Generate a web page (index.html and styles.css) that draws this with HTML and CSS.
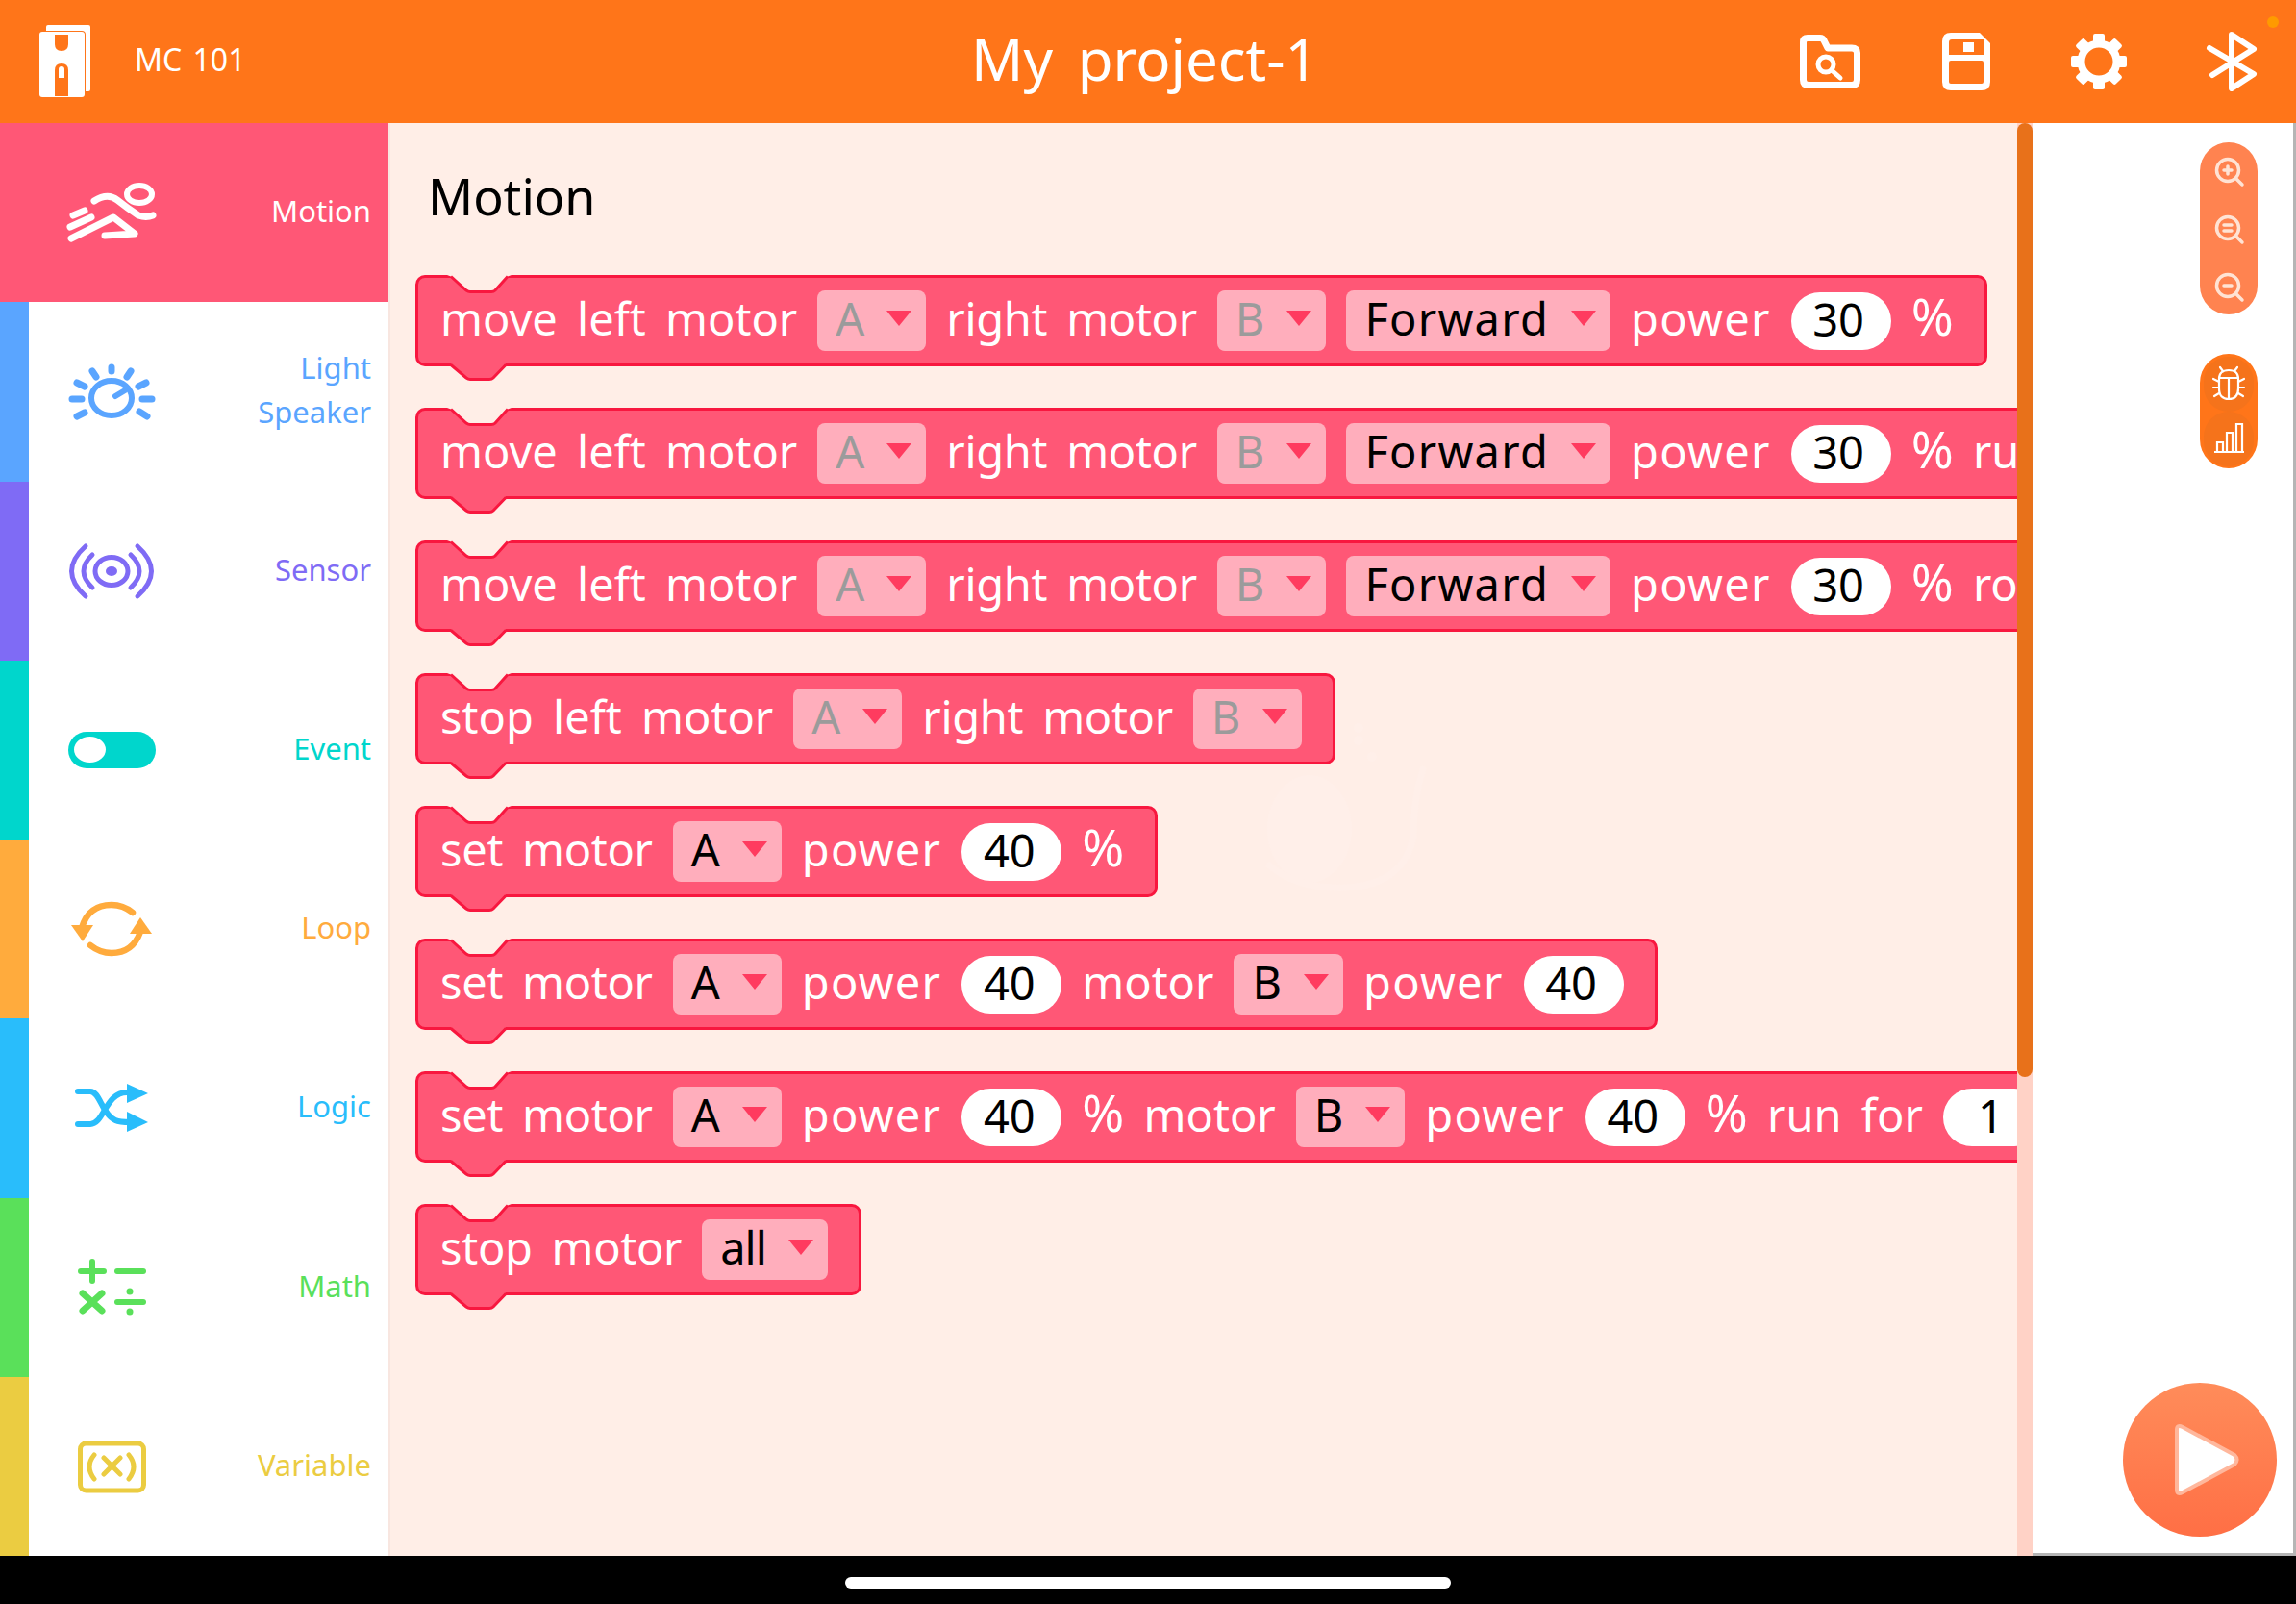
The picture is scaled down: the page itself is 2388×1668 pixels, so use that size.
FILE: index.html
```html
<!DOCTYPE html>
<html lang="en">
<head>
  <meta charset="UTF-8" />
  <title>My project-1</title>
  <link rel="stylesheet" href="styles.css">
</head>
<body>
  <svg class="defs" width="0" height="0">
    <symbol id="notch-top" viewBox="0 0 67 22">
      <path d="M0 0H67L63 1.5L50 16Q48.5 17.5 46 17.5H24Q22 17.5 20 16L4 1.5Z" fill="#ffeee7"/>
      <path d="M4 1.5L20 16Q22 17.5 24 17.5H46Q48.5 17.5 50 16L63 1.5" fill="none" stroke="#f8173f" stroke-width="3"/>
    </symbol>
    <symbol id="notch-bottom" viewBox="0 0 67 20">
      <path d="M4 0L20 15Q22 16.5 24 16.5H44Q46.5 16.5 48 15L61 0Z" fill="#ff5776"/>
      <path d="M4 1.5L20 15Q22 16.5 24 16.5H44Q46.5 16.5 48 15L61 1.5" fill="none" stroke="#f8173f" stroke-width="3"/>
    </symbol>
  </svg>

  <div class="app">
    <header class="topbar">
      <div class="device">
        <svg class="logo" width="54" height="76" viewBox="41 23 54 76">
          <rect x="48" y="23" width="46" height="69" rx="2" fill="#fff"/>
          <rect x="40" y="29" width="49" height="70" rx="4" fill="#ff7519"/>
          <rect x="41" y="30" width="47" height="68" rx="3" fill="#fff"/>
          <path d="M57 33H71V43Q71 50 64 50Q57 50 57 43Z" fill="#ff7519"/>
          <path d="M57 97V70Q57 63 64 63Q71 63 71 70V97Z" fill="#ff7519"/>
          <path d="M61 78V69Q61 66 64 66Q67 66 67 69V78Z" fill="#fff"/>
        </svg>
        <span class="device-name">MC 101</span>
      </div>
      <h1 class="project">My project-1</h1>
      <div class="top-actions">
        <svg width="64" height="58" viewBox="1872 35 64 58" fill="none" stroke="#fff" stroke-linecap="round" stroke-linejoin="round">
          <path d="M1880 39.5H1893Q1896 39.5 1897 42L1901 50H1926Q1931.5 50 1931.5 55V83Q1931.5 88.5 1926 88.5H1881Q1875.5 88.5 1875.5 83V44Q1875.5 39.5 1880 39.5Z" stroke-width="7"/>
          <circle cx="1899" cy="67" r="8" stroke-width="5"/>
          <path d="M1905 73L1914 81" stroke-width="5"/>
        </svg>
        <svg width="50" height="60" viewBox="2019 34 50 60">
          <path d="M2028 34H2058L2069 45V85Q2069 94 2060 94H2028Q2019 94 2019 85V43Q2019 34 2028 34Z" fill="#fff"/>
          <path d="M2026 44Q2026 41 2029 41H2062V57H2026Z" fill="#ff7519"/>
          <rect x="2041" y="44" width="11" height="10" fill="#fff"/>
          <rect x="2026" y="63" width="36" height="24" rx="2" fill="#ff7519"/>
        </svg>
        <svg class="gear" width="58" height="58" viewBox="-29 -29 58 58">
          <g fill="#fff">
            <rect x="-6" y="-29" width="12" height="12" rx="2"/>
            <rect x="-6" y="-29" width="12" height="12" rx="2" transform="rotate(45)"/>
            <rect x="-6" y="-29" width="12" height="12" rx="2" transform="rotate(90)"/>
            <rect x="-6" y="-29" width="12" height="12" rx="2" transform="rotate(135)"/>
            <rect x="-6" y="-29" width="12" height="12" rx="2" transform="rotate(180)"/>
            <rect x="-6" y="-29" width="12" height="12" rx="2" transform="rotate(225)"/>
            <rect x="-6" y="-29" width="12" height="12" rx="2" transform="rotate(270)"/>
            <rect x="-6" y="-29" width="12" height="12" rx="2" transform="rotate(315)"/>
          </g>
          <circle r="18.5" fill="none" stroke="#fff" stroke-width="8"/>
        </svg>
        <svg class="bt" width="54" height="62" viewBox="2294 33 54 62" fill="none" stroke="#fff" stroke-width="6" stroke-linecap="round" stroke-linejoin="round">
          <path d="M2298 50L2344 77L2321 92V36L2344 51L2301 78"/>
        </svg>
      </div>
      <span class="status-dot"></span>
    </header>

    <main class="editor">
      <nav class="sidebar">
        <div class="cat cat-motion">
          <svg class="cat-icon" width="100" height="70" viewBox="66 186 100 70" fill="none" stroke="#fff" stroke-width="7" stroke-linecap="round" stroke-linejoin="round">
            <ellipse cx="145" cy="202" rx="13" ry="9" stroke-width="6"/>
            <path d="M98 209Q112 200 122 208T144 224Q152 227 159 224"/>
            <path d="M74 248L118 226L140 243L109 245"/>
            <path d="M76 224L88 219M73 236L95 226"/>
          </svg>
          <span class="cat-label">Motion</span>
        </div>
        <div class="cat cat-light">
          <svg class="cat-icon" width="100" height="70" viewBox="66 372 100 70" fill="none" stroke="#5aa5ff" stroke-width="6" stroke-linecap="round">
            <ellipse cx="116" cy="414" rx="21" ry="18"/>
            <path d="M120 412L130 406"/>
            <path d="M116 382V386M96 386L100 392M136 386L132 392M80 398L88 402M152 398L144 402M75 415H85M158 415H148M80 433L88 429M153 433L145 428" stroke-width="7"/>
          </svg>
          <span class="cat-label">Light<br>Speaker</span>
        </div>
        <div class="cat cat-sensor">
          <svg class="cat-icon" width="100" height="70" viewBox="66 558 100 70" fill="none" stroke="#7f6bf5" stroke-width="5" stroke-linecap="round">
            <ellipse cx="116" cy="593" rx="17" ry="14.5"/>
            <ellipse cx="116" cy="593" rx="6" ry="5" fill="#7f6bf5" stroke="none"/>
            <path d="M96 576Q78 593 96 610M136 576Q154 593 136 610"/>
            <path d="M89 567Q60 593 89 619M143 567Q172 593 143 619"/>
          </svg>
          <span class="cat-label">Sensor</span>
        </div>
        <div class="cat cat-event">
          <div class="toggle"><span class="toggle-knob"></span></div>
          <span class="cat-label">Event</span>
        </div>
        <div class="cat cat-loop">
          <svg class="cat-icon" width="100" height="70" viewBox="66 932 100 70" fill="none" stroke="#ffab3d" stroke-width="6.5" stroke-linecap="round">
            <path d="M138 950Q128 942 116 942Q92 942 85 966"/>
            <path d="M94 984Q104 992 116 992Q138 992 146 970"/>
            <path d="M74 963H97L86 980Z" fill="#ffab3d" stroke="none"/>
            <path d="M135 972H158L146 955Z" fill="#ffab3d" stroke="none"/>
          </svg>
          <span class="cat-label">Loop</span>
        </div>
        <div class="cat cat-logic">
          <svg class="cat-icon" width="100" height="70" viewBox="66 1118 100 70" fill="none" stroke="#29bdfb" stroke-width="6" stroke-linecap="round">
            <path d="M81 1170H94C108 1170 110 1137 132 1137H136"/>
            <path d="M81 1136H94C104 1136 106 1160 120 1166Q124 1168 136 1168"/>
            <path d="M132 1128L154 1138L132 1148Z" fill="#29bdfb" stroke="none"/>
            <path d="M132 1157L154 1168L132 1178Z" fill="#29bdfb" stroke="none"/>
          </svg>
          <span class="cat-label">Logic</span>
        </div>
        <div class="cat cat-math">
          <svg class="cat-icon" width="100" height="70" viewBox="66 1304 100 70" fill="none" stroke="#5ae05a" stroke-width="6" stroke-linecap="round">
            <path d="M84 1322H108M96 1312V1332"/>
            <path d="M122 1322H149"/>
            <path d="M86 1345L106 1363M106 1345L86 1363" stroke-width="7"/>
            <path d="M122 1354H149"/>
            <circle cx="135" cy="1343" r="3.5" fill="#5ae05a" stroke="none"/>
            <circle cx="135" cy="1364" r="3.5" fill="#5ae05a" stroke="none"/>
          </svg>
          <span class="cat-label">Math</span>
        </div>
        <div class="cat cat-variable">
          <svg class="cat-icon" width="100" height="70" viewBox="66 1490 100 70" fill="none" stroke="#ebcc41" stroke-width="5" stroke-linecap="round">
            <rect x="83.5" y="1501" width="66" height="49" rx="6"/>
            <path d="M98 1513Q88 1525 98 1538M134 1513Q144 1525 134 1538"/>
            <path d="M108 1516L125 1533M125 1516L108 1533"/>
          </svg>
          <span class="cat-label">Variable</span>
        </div>
      </nav>

      <section class="workspace">
        <svg class="watermark" width="340" height="219" viewBox="0 0 340 219" fill="none" stroke="#ffefe9" stroke-width="7" stroke-linecap="round">
          <ellipse cx="132" cy="117" rx="44" ry="56" fill="#ffefe9" stroke="none"/>
          <path d="M250 55Q240 85 240 125Q230 175 170 178Q120 180 90 155"/>
          <path d="M183 25L183 25M197 42L197 42M183 12L183 12" stroke-width="10"/>
        </svg>
        <h2 class="section-title">Motion</h2>

        <div class="block">
          <svg class="notch notch-in"><use href="#notch-top"/></svg>
          <span>move left motor</span>
          <span class="drop muted">A<i class="caret"></i></span>
          <span class="tight">right motor</span>
          <span class="drop muted">B<i class="caret"></i></span>
          <span class="drop wide">Forward<i class="caret"></i></span>
          <span class="wide">power</span>
          <span class="num">30</span>
          <span><span class="pct">%</span></span>
          <svg class="notch notch-out"><use href="#notch-bottom"/></svg>
        </div>

        <div class="block">
          <svg class="notch notch-in"><use href="#notch-top"/></svg>
          <span>move left motor</span>
          <span class="drop muted">A<i class="caret"></i></span>
          <span class="tight">right motor</span>
          <span class="drop muted">B<i class="caret"></i></span>
          <span class="drop wide">Forward<i class="caret"></i></span>
          <span class="wide">power</span>
          <span class="num">30</span>
          <span><span class="pct">%</span> run for</span>
          <svg class="notch notch-out"><use href="#notch-bottom"/></svg>
        </div>

        <div class="block">
          <svg class="notch notch-in"><use href="#notch-top"/></svg>
          <span>move left motor</span>
          <span class="drop muted">A<i class="caret"></i></span>
          <span class="tight">right motor</span>
          <span class="drop muted">B<i class="caret"></i></span>
          <span class="drop wide">Forward<i class="caret"></i></span>
          <span class="wide">power</span>
          <span class="num">30</span>
          <span><span class="pct">%</span> rotations</span>
          <svg class="notch notch-out"><use href="#notch-bottom"/></svg>
        </div>

        <div class="block">
          <svg class="notch notch-in"><use href="#notch-top"/></svg>
          <span>stop left motor</span>
          <span class="drop muted">A<i class="caret"></i></span>
          <span class="tight">right motor</span>
          <span class="drop muted">B<i class="caret"></i></span>
          <svg class="notch notch-out"><use href="#notch-bottom"/></svg>
        </div>

        <div class="block">
          <svg class="notch notch-in"><use href="#notch-top"/></svg>
          <span class="tight">set motor</span>
          <span class="drop">A<i class="caret"></i></span>
          <span class="wide">power</span>
          <span class="num">40</span>
          <span><span class="pct">%</span></span>
          <svg class="notch notch-out"><use href="#notch-bottom"/></svg>
        </div>

        <div class="block">
          <svg class="notch notch-in"><use href="#notch-top"/></svg>
          <span class="tight">set motor</span>
          <span class="drop">A<i class="caret"></i></span>
          <span class="wide">power</span>
          <span class="num">40</span>
          <span>motor</span>
          <span class="drop">B<i class="caret"></i></span>
          <span class="wide">power</span>
          <span class="num">40</span>
          <svg class="notch notch-out"><use href="#notch-bottom"/></svg>
        </div>

        <div class="block">
          <svg class="notch notch-in"><use href="#notch-top"/></svg>
          <span class="tight">set motor</span>
          <span class="drop">A<i class="caret"></i></span>
          <span class="wide">power</span>
          <span class="num">40</span>
          <span><span class="pct">%</span> motor</span>
          <span class="drop">B<i class="caret"></i></span>
          <span class="wide">power</span>
          <span class="num">40</span>
          <span><span class="pct">%</span> run for</span>
          <span class="num">1</span>
          <svg class="notch notch-out"><use href="#notch-bottom"/></svg>
        </div>

        <div class="block">
          <svg class="notch notch-in"><use href="#notch-top"/></svg>
          <span class="tight">stop motor</span>
          <span class="drop squeeze">all<i class="caret"></i></span>
          <svg class="notch notch-out"><use href="#notch-bottom"/></svg>
        </div>
      </section>

      <div class="scrollbar"><div class="scroll-thumb"></div></div>

      <aside class="stage">
        <div class="tool-pill tool-zoom">
          <svg width="44" height="44" viewBox="-21 -21 44 44" fill="none" stroke="#ffe3d4" stroke-width="3.5" stroke-linecap="round">
            <circle r="11.5"/><path d="M9 9L15 15M-4 0H4M0 -4V4"/>
          </svg>
          <svg width="44" height="44" viewBox="-21 -21 44 44" fill="none" stroke="#ffe3d4" stroke-width="3.5" stroke-linecap="round">
            <circle r="11.5"/><path d="M9 9L15 15M-4 -3H4M-4 3H4"/>
          </svg>
          <svg width="44" height="44" viewBox="-21 -21 44 44" fill="none" stroke="#ffe3d4" stroke-width="3.5" stroke-linecap="round">
            <circle r="11.5"/><path d="M9 9L15 15M-4 0H4"/>
          </svg>
        </div>
        <div class="tool-pill tool-debug">
          <span class="tool-btn">
            <svg width="36" height="38" viewBox="0 0 36 38" fill="none" stroke="#fff" stroke-width="2.2" stroke-linecap="round">
              <path d="M8 14Q8 5 18 5Q28 5 28 14V24Q28 35 18 35Q8 35 8 24Z"/>
              <path d="M8 13H28M18 13V35M12 6L9 2M24 6L27 2M8 17L2 14M28 17L34 14M8 23H2M28 23H34M8 29L3 32M28 29L33 32"/>
            </svg>
          </span>
          <span class="tool-btn">
            <svg width="34" height="34" viewBox="0 0 34 34" fill="none" stroke="#fff" stroke-width="2.2">
              <path d="M2 31H33M5 31V21H11V31M15 31V11H21V31M25 31V2H31V31"/>
            </svg>
          </span>
        </div>
        <div class="run-btn">
          <svg width="80" height="82" viewBox="0 0 80 82">
            <path d="M10 10Q10 4 16 7L70 36Q75 41 70 46L16 75Q10 78 10 72Z" fill="#fff" stroke="#ffb79c" stroke-width="4" stroke-linejoin="round"/>
          </svg>
        </div>
      </aside>
    </main>

    <footer class="home-area"><span class="home-bar"></span></footer>
  </div>
</body>
</html>
```

FILE: styles.css
```css
html, body {
  margin: 0;
  height: 100%;
}

body {
  font-family: "Noto Sans", sans-serif;
  background: #000;
  overflow: hidden;
}

.defs {
  position: absolute;
}

.app {
  display: grid;
  grid-template-rows: 128px 1490px 50px;
  height: 1668px;
}

/* top bar */

.topbar {
  position: relative;
  display: grid;
  grid-template-columns: 1fr auto 1fr;
  align-items: center;
  padding: 0 40px 0 41px;
  background: #ff7519;
  color: #fff;
}

.device {
  display: flex;
  align-items: center;
  gap: 45px;
}

.device-name {
  padding-bottom: 5px;
  font-size: 32px;
  word-spacing: 3px;
}

.project {
  margin: 0 8px 0 0;
  padding-bottom: 7px;
  font-size: 60px;
  font-weight: 400;
  word-spacing: 10px;
}

.top-actions {
  display: flex;
  align-items: center;
  justify-content: flex-end;
  gap: 84px;
}

.bt {
  margin-left: -2px;
}

.status-dot {
  position: absolute;
  top: 17px;
  right: 18px;
  width: 12px;
  height: 12px;
  border-radius: 50%;
  background: #ff9a00;
}

/* main columns */

.editor {
  display: grid;
  grid-template-columns: 404px 1694px 16px 274px;
  min-height: 0;
}

.sidebar {
  display: grid;
  grid-template-rows: repeat(8, 1fr);
  background: #fff;
}

.cat {
  display: flex;
  align-items: center;
  justify-content: space-between;
  padding: 0 18px 0 36px;
  border-left: 30px solid;
  font-size: 31px;
  line-height: 46px;
  text-align: right;
}

.cat-label {
  padding-bottom: 4px;
}

.cat-icon {
  display: block;
}

.cat-motion   { background: #ff5776; border-left-color: #ff5776; color: #fff; }
.cat-light    { border-left-color: #5aa5ff; color: #5aa5ff; }
.cat-sensor   { border-left-color: #7f6bf5; color: #7f6bf5; }
.cat-event    { border-left-color: #00d6cc; color: #00d6cc; }
.cat-loop     { border-left-color: #ffab3d; color: #ffab3d; }
.cat-logic    { border-left-color: #29bdfb; color: #29bdfb; }
.cat-math     { border-left-color: #5ae05a; color: #5ae05a; }
.cat-variable { border-left-color: #ebcc41; color: #ebcc41; }

.toggle {
  display: flex;
  align-items: center;
  box-sizing: border-box;
  width: 91px;
  height: 38px;
  margin-left: 5px;
  margin-right: auto;
  padding-left: 6px;
  border-radius: 19px;
  background: #00d6cc;
}

.toggle-knob {
  width: 33px;
  height: 27px;
  border-radius: 50%;
  background: #fff;
}

/* workspace */

.workspace {
  position: relative;
  display: flex;
  flex-direction: column;
  align-items: flex-start;
  gap: 43px;
  box-sizing: border-box;
  padding: 46px 0 0 28px;
  overflow: hidden;
  background: #ffeee7;
  box-shadow: inset 2px 0 0 #f8e6e0;
}

/* faint logo behind the blocks */
.watermark {
  position: absolute;
  top: 617px;
  left: 826px;
}

.section-title {
  position: relative;
  margin: 0 0 9px 13px;
  font-size: 52px;
  font-weight: 400;
  line-height: 60px;
  color: #000;
}

.block {
  position: relative;
  display: flex;
  flex-shrink: 0;
  align-items: center;
  gap: 21px;
  box-sizing: border-box;
  height: 95px;
  padding: 0 32px 0 23px;
  border: 3px solid #f8173f;
  border-radius: 10px;
  background: #ff5776;
  color: #fff;
  font-size: 47px;
  white-space: nowrap;
  word-spacing: 8px;
}

.block > span {
  box-sizing: border-box;
  padding-bottom: 6px;
}

.tight {
  letter-spacing: -0.3px;
}

.wide {
  letter-spacing: 1.25px;
}

.squeeze {
  letter-spacing: -1px;
}

.pct {
  font-size: 53px;
  line-height: 1;
}

.notch {
  position: absolute;
  left: 30px;
  width: 67px;
}

.notch-in {
  top: -3px;
  height: 22px;
}

.notch-out {
  bottom: -20px;
  height: 20px;
}

.block > .drop {
  display: flex;
  align-items: center;
  gap: 23px;
  height: 63px;
  padding: 0 15px 6px 19px;
  border-radius: 8px;
  background: #ffaebc;
  color: #000;
}

.block > .drop.muted {
  color: #9b9b9b;
}

.caret {
  width: 0;
  height: 0;
  border-top: 16px solid #ff3b5f;
  border-left: 13.5px solid transparent;
  border-right: 13.5px solid transparent;
}

.block > .num {
  width: 104px;
  height: 60px;
  padding: 0 5px 3px 0;
  border-radius: 30px;
  background: #fff;
  color: #000;
  line-height: 57px;
  text-align: center;
}

/* scrollbar */

.scrollbar {
  background: #ffd2c6;
}

.scroll-thumb {
  height: 992px;
  border-radius: 8px;
  background: #e8711a;
}

/* right stage */

.stage {
  display: flex;
  flex-direction: column;
  align-items: flex-end;
  gap: 41px;
  padding: 20px 37px 17px 0;
  border-right: 3px solid #b5b5b5;
  border-bottom: 3px solid #b5b5b5;
  background: #fff;
}

.tool-pill {
  display: flex;
  flex-direction: column;
  align-items: center;
  width: 60px;
  border-radius: 30px;
}

.tool-zoom {
  gap: 16px;
  justify-content: center;
  height: 179px;
  background: #ff8350;
}

.tool-zoom svg {
  display: block;
}

.tool-debug {
  justify-content: center;
  height: 119px;
  background: #ff7519;
}

.tool-btn {
  display: flex;
  align-items: center;
  justify-content: center;
  width: 52px;
  height: 57px;
  border-radius: 26px;
  background: #f5731b;
}

.run-btn {
  display: flex;
  align-items: center;
  justify-content: center;
  box-sizing: border-box;
  width: 160px;
  height: 160px;
  margin-top: auto;
  margin-right: -20px;
  padding-left: 12px;
  border-radius: 50%;
  background: linear-gradient(#ff8c5a, #ff6f45);
}

/* home indicator */

.home-area {
  display: flex;
  align-items: center;
  justify-content: center;
  padding-top: 6px;
  background: #000;
}

.home-bar {
  width: 630px;
  height: 12px;
  border-radius: 6px;
  background: #fff;
}
```
